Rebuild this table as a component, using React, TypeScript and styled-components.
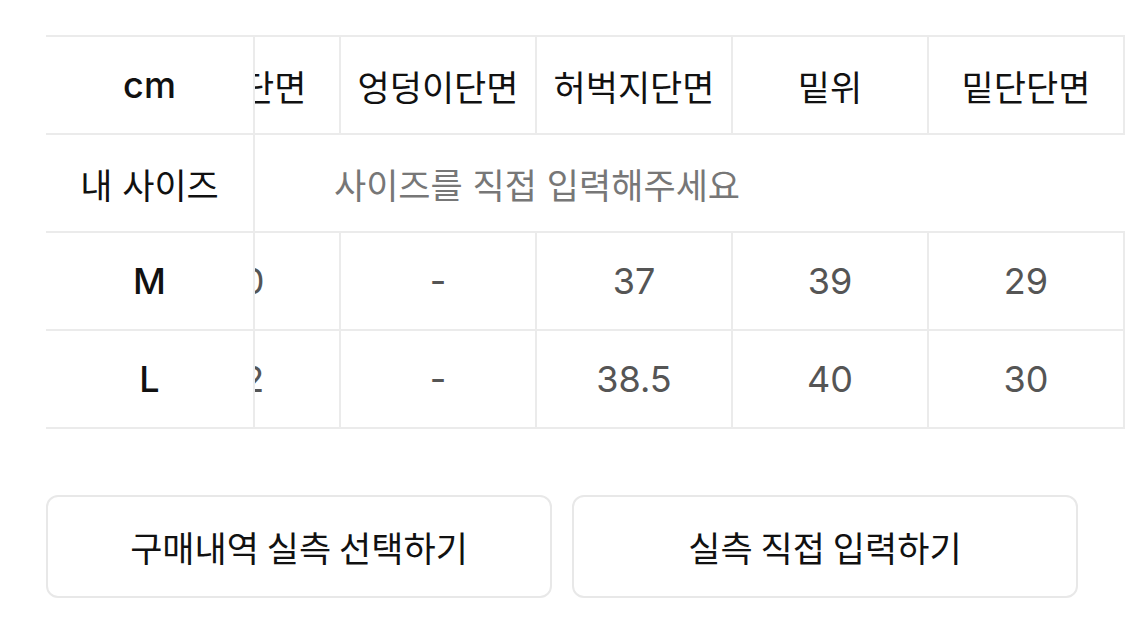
import React, { useLayoutEffect, useRef } from "react";
import styled, { createGlobalStyle } from "styled-components";

const GlobalStyle = createGlobalStyle`
  html, body {
    margin: 0;
    padding: 0;
    background: #ffffff;
  }
  body {
    font-family: "Inter", "Noto Sans CJK KR", "Noto Sans", sans-serif;
    color: #111111;
  }
  * { box-sizing: border-box; }
`;

const LINE = "#ebebeb";

const Page = styled.div`
  display: flex;
  flex-direction: column;
  padding-top: 35px;
  padding-left: 46px;
`;

const Scroller = styled.div`
  width: 100%;
  overflow-x: auto;
  scrollbar-width: none;
  &::-webkit-scrollbar {
    display: none;
  }
`;

const Grid = styled.div`
  display: grid;
  grid-template-columns: 209px repeat(6, 196px);
  width: max-content;
  border-top: 2px solid ${LINE};
`;

const Cell = styled.div<{ $muted?: boolean; $divider?: boolean; $span?: number }>`
  height: 98px;
  display: flex;
  align-items: center;
  justify-content: center;
  border-bottom: 2px solid ${LINE};
  border-right: ${(p) => (p.$divider ? `2px solid ${LINE}` : "none")};
  grid-column: ${(p) => (p.$span ? `span ${p.$span}` : "auto")};
  font-size: 35px;
  font-weight: 400;
  color: ${(p) => (p.$muted ? "#555555" : "#111111")};
  white-space: nowrap;
  background: #ffffff;
`;

const StickyCell = styled(Cell)`
  position: sticky;
  left: 0;
  z-index: 1;
  border-right: 2px solid ${LINE};
  color: #111111;
`;

const Latin = styled.span<{ $strong?: boolean }>`
  font-size: 36px;
  font-weight: ${(p) => (p.$strong ? 500 : 400)};
`;

const Placeholder = styled.span`
  color: #777777;
  font-size: 35px;
`;

const Actions = styled.div`
  display: flex;
  gap: 20px;
  margin-top: 66px;
  padding-right: 47px;
`;

const ActionButton = styled.button`
  flex: 1;
  height: 103px;
  border: 2px solid #e8e8e8;
  border-radius: 12px;
  background: #ffffff;
  font-family: "Noto Sans CJK KR", "Noto Sans", sans-serif;
  font-size: 35px;
  font-weight: 400;
  color: #111111;
  cursor: pointer;
`;

const headers = ["총장", "허리단면", "엉덩이단면", "허벅지단면", "밑위", "밑단단면"];

const rows: { size: string; values: string[] }[] = [
  { size: "M", values: ["100", "30", "-", "37", "39", "29"] },
  { size: "L", values: ["102", "32", "-", "38.5", "40", "30"] },
];

export default function App() {
  const scrollRef = useRef<HTMLDivElement>(null);

  useLayoutEffect(() => {
    const el = scrollRef.current;
    if (el) el.scrollLeft = el.scrollWidth - el.clientWidth;
  }, []);

  return (
    <>
      <GlobalStyle />
      <Page>
        <Scroller ref={scrollRef}>
          <Grid>
            <StickyCell>
              <Latin $strong>cm</Latin>
            </StickyCell>
            {headers.map((h) => (
              <Cell key={h} $divider>
                {h}
              </Cell>
            ))}

            <StickyCell>내 사이즈</StickyCell>
            <Cell $span={6}>
              <Placeholder>사이즈를 직접 입력해주세요</Placeholder>
            </Cell>

            {rows.map((r) => (
              <React.Fragment key={r.size}>
                <StickyCell>
                  <Latin $strong>{r.size}</Latin>
                </StickyCell>
                {r.values.map((v, i) => (
                  <Cell key={i} $muted $divider>
                    <Latin>{v}</Latin>
                  </Cell>
                ))}
              </React.Fragment>
            ))}
          </Grid>
        </Scroller>
        <Actions>
          <ActionButton>구매내역 실측 선택하기</ActionButton>
          <ActionButton>실측 직접 입력하기</ActionButton>
        </Actions>
      </Page>
    </>
  );
}
